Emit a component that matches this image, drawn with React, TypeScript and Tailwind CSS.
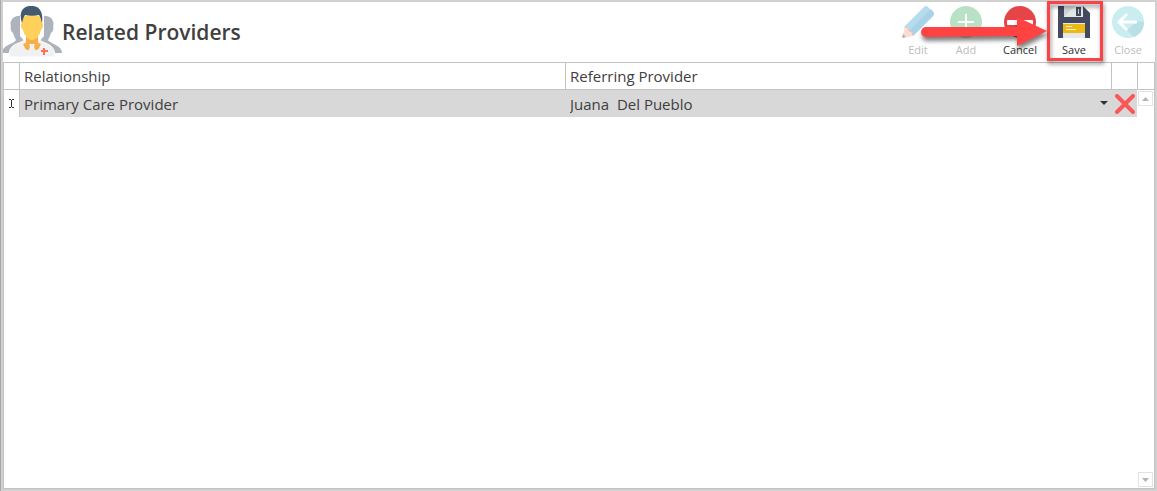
import React, { useState } from "react";

interface ToolbarButtonProps {
  label: string;
  disabled?: boolean;
  className?: string;
  onClick?: () => void;
  children: React.ReactNode;
}

const ToolbarButton: React.FC<ToolbarButtonProps> = ({ label, disabled, className = "w-[54px]", onClick, children }) => (
  <button
    type="button"
    disabled={disabled}
    onClick={onClick}
    className={`flex flex-col items-center pt-1 text-[11px] text-[#2f2f2f] disabled:text-[#bdbdbd] ${className}`}
  >
    {children}
    <span className="leading-6">{label}</span>
  </button>
);

const ProvidersIcon = () => (
  <svg width="59" height="52" viewBox="1 0 59 52" aria-hidden="true">
    {/* people in the back */}
    <path
      d="M21 10C11 8 7 15 9 21c-1 1 0 5 2 6 1 3 2 5 3 7-2 4-14 5-14 13h8l14-12zM39 10c10-2 14 5 12 11 1 1 0 5-2 6-1 3-2 5-3 7 2 4 14 5 14 13h-8L38 35z"
      fill="#adb3bd"
    />
    <path d="M18 8h24v22l-6 7H24l-6-7z" fill="#fff" />
    {/* doctor */}
    <path d="M7 51c0-10 4-12 10-14l8-4h10l8 4c6 2 10 5 10 14z" fill="#f1f1f3" stroke="#fff" />
    <path d="M24 30h12v7l3 1-3 6-3-4-3 4-3-4-3 4-3-6 3-1z" fill="#f5b04a" />
    <path d="M27 38h6l-1 3 1 5-3 4-3-4 1-5z" fill="#f1f1f3" />
    <path d="M23 37l5 3-1 4-2 0zM37 37l-5 3 1 4 2 0z" fill="#f5b04a" />
    <path d="M20 12c3-4 17-4 20 0v5c2 0 1 6-1 7-1 5-5 10-9 10s-8-5-9-10c-2-1-3-7-1-7z" fill="#ffd05c" />
    <path d="M20 17C17 9 19 1 27 0c8-1 15 3 13 17-1-3-1-5-3-8-5 1-9 1-14 0-2 3-2 5-3 8z" fill="#425b70" />
    <path d="M42 42v7M39 45h7" stroke="#ff7058" strokeWidth="2" />
  </svg>
);

const EditIcon = () => (
  <svg width="32" height="32" viewBox="0 0 32 32" aria-hidden="true">
    <path d="M22 1q2-2 4 0l5 5q2 2 0 4L11 30 2 21z" fill="#b5dced" />
    <path d="M7 25L29 3l3 4-1 3-20 20z" fill="#a8d2e6" />
    <path d="M3 21l3 1 1 3 3 1 1 4-11 2z" fill="#fbdcd2" />
    <path d="M1 28l3 3-4 1z" fill="#a8b5bd" />
    <path d="M3 21l3 1 1 3 3 1 1 4" stroke="#f6c1bd" fill="none" />
  </svg>
);

const AddIcon = () => (
  <svg width="32" height="32" viewBox="0 0 32 32" aria-hidden="true">
    <circle cx="16" cy="16" r="16" fill="#b9e1c5" />
    <path d="M16 8v16M8 16h16" stroke="#fff" strokeWidth="2" />
  </svg>
);

const CancelIcon = () => (
  <svg width="32" height="32" viewBox="0 0 32 32" aria-hidden="true">
    <circle cx="16" cy="16" r="16" fill="#e64548" />
    <rect x="3" y="14" width="26" height="5" rx="1" fill="#fff" />
  </svg>
);

const SaveIcon = () => (
  <svg width="32" height="32" viewBox="0 0 32 32" aria-hidden="true">
    <path d="M0 0h25l7 7v25H0z" fill="#434a5f" />
    <path d="M6 0h19v11H6z" fill="#d0d4d7" />
    <path d="M6 11L17 0h8v11z" fill="#e3e5e7" />
    <path d="M19 2h3v7h-3z" fill="#c3c8cd" stroke="#434a5f" strokeWidth="2" />
    <path d="M5 17h22v15H5z" fill="#e6e9ea" />
    <path d="M5 18h22v9H5z" fill="#edb916" />
    <path d="M8 20.500h6M8 23.500h10" stroke="#fff3c4" />
  </svg>
);

const CloseIcon = () => (
  <svg width="32" height="32" viewBox="0 0 32 32" aria-hidden="true">
    <circle cx="16" cy="16" r="16" fill="#c9edf1" />
    <path d="M15 24l7 7c6-2 10-8 10-15l-6-1z" fill="#b8e0e6" />
    <path d="M15 8l-8 8 8 8M7 16h18" stroke="#fff" strokeWidth="3" fill="none" />
  </svg>
);

const Pointer = () => (
  <svg
    className="pointer-events-none absolute top-3 right-full drop-shadow-[1px_4px_2px_rgba(0,0,0,0.5)]"
    width="126"
    height="36"
    viewBox="0 0 126 36"
    aria-hidden="true"
  >
    <path d="M5 13L96 13V3l30 14-30 15V22L5 23a5 5 0 0 1 0-10z" fill="#ff4343" />
  </svg>
);

const PROVIDERS = ["Juana \u00a0Del Pueblo"];

const App: React.FC = () => {
  const [provider, setProvider] = useState(PROVIDERS[0]);

  return (
    <div className="h-screen border-l border-[#a9a9a9] font-['Open_Sans',sans-serif] text-[#404040]">
      <div className="flex h-full flex-col border-2 border-[#d0d0d0] bg-white">
        <header className="flex h-[60px] shrink-0 items-start justify-between">
          <div className="flex items-center pt-1">
            <ProvidersIcon />
            <h1 className="text-[21px] leading-7 font-semibold">Related Providers</h1>
          </div>

          <div className="flex">
            <ToolbarButton label="Edit" disabled className="w-[42px]">
              <EditIcon />
            </ToolbarButton>
            <ToolbarButton label="Add" disabled>
              <AddIcon />
            </ToolbarButton>
            <ToolbarButton label="Cancel">
              <CancelIcon />
            </ToolbarButton>
            <div className="relative">
              <ToolbarButton label="Save">
                <SaveIcon />
              </ToolbarButton>
              <div className="pointer-events-none absolute -top-px -right-0.5 bottom-px left-0 border-3 border-[#fa4347] drop-shadow-[1px_3px_2px_rgba(0,0,0,0.45)]" />
              <Pointer />
            </div>
            <ToolbarButton label="Close" disabled>
              <CloseIcon />
            </ToolbarButton>
          </div>
        </header>

        <main className="flex min-h-0 flex-1 border border-[#c3c3c3]">
          <div className="min-w-0 flex-1">
            <table className="w-full table-fixed border-separate border-spacing-0 text-left text-[15px] leading-[26px]">
              <colgroup>
                <col className="w-4" />
                <col />
                <col />
                <col className="w-[25px]" />
              </colgroup>
              <thead>
                <tr>
                  <th className="border-r border-b border-[#c3c3c3] p-0" />
                  <th className="border-r border-b border-[#c3c3c3] px-1 py-0 font-normal">Relationship</th>
                  <th className="border-r border-b border-[#c3c3c3] px-1 py-0 font-normal">Referring Provider</th>
                  <th className="border-b border-[#c3c3c3] p-0" />
                </tr>
              </thead>
              <tbody>
                <tr className="h-[27px] bg-[#d8d8d8]">
                  <td className="border-r border-[#c3c3c3] bg-white p-0">
                    <svg className="mx-auto" width="7" height="9" viewBox="0 0 7 9" aria-hidden="true">
                      <path d="M1 .5h2M4 .5h2M3.500 1v7M1 8.500h2M4 8.500h2" stroke="#333" fill="none" />
                    </svg>
                  </td>
                  <td className="px-1 py-0">Primary Care Provider</td>
                  <td className="p-0">
                    <div className="relative">
                      <select
                        aria-label="Referring Provider"
                        value={provider}
                        onChange={(e) => setProvider(e.target.value)}
                        className="block h-[27px] w-full appearance-none bg-transparent px-1 outline-none"
                      >
                        {PROVIDERS.map((name) => (
                          <option key={name} value={name}>
                            {name}
                          </option>
                        ))}
                      </select>
                      <svg
                        className="pointer-events-none absolute top-[11px] right-1"
                        width="8"
                        height="4"
                        viewBox="0 0 8 4"
                        aria-hidden="true"
                      >
                        <path d="M0 0h8L4 4z" fill="#333" />
                      </svg>
                    </div>
                  </td>
                  <td className="p-0">
                    <button type="button" aria-label="Delete" className="flex h-[26px] w-full items-center justify-center">
                      <svg width="20" height="20" viewBox="0 0 20 20" aria-hidden="true">
                        <path d="M2 2l16 16M18 2L2 18" stroke="#fd5658" strokeWidth="4" strokeLinecap="round" />
                      </svg>
                    </button>
                  </td>
                </tr>
              </tbody>
            </table>
          </div>

          {/* scrollbar */}
          <div className="flex w-[17px] shrink-0 flex-col">
            <div className="h-[27px] border-b border-l border-[#c3c3c3]" />
            <div className="flex flex-1 flex-col items-center justify-between py-px">
              <button type="button" aria-label="Scroll up" className="flex size-[15px] items-center justify-center border border-[#e2e2e2]">
                <svg width="7" height="4" viewBox="0 0 7 4" aria-hidden="true">
                  <path d="M0 4h7L3.500 0z" fill="#b4b4b4" />
                </svg>
              </button>
              <button type="button" aria-label="Scroll down" className="flex size-[15px] items-center justify-center border border-[#e2e2e2]">
                <svg width="7" height="4" viewBox="0 0 7 4" aria-hidden="true">
                  <path d="M0 0h7L3.500 4z" fill="#b4b4b4" />
                </svg>
              </button>
            </div>
          </div>
        </main>
      </div>
    </div>
  );
};

export default App;
